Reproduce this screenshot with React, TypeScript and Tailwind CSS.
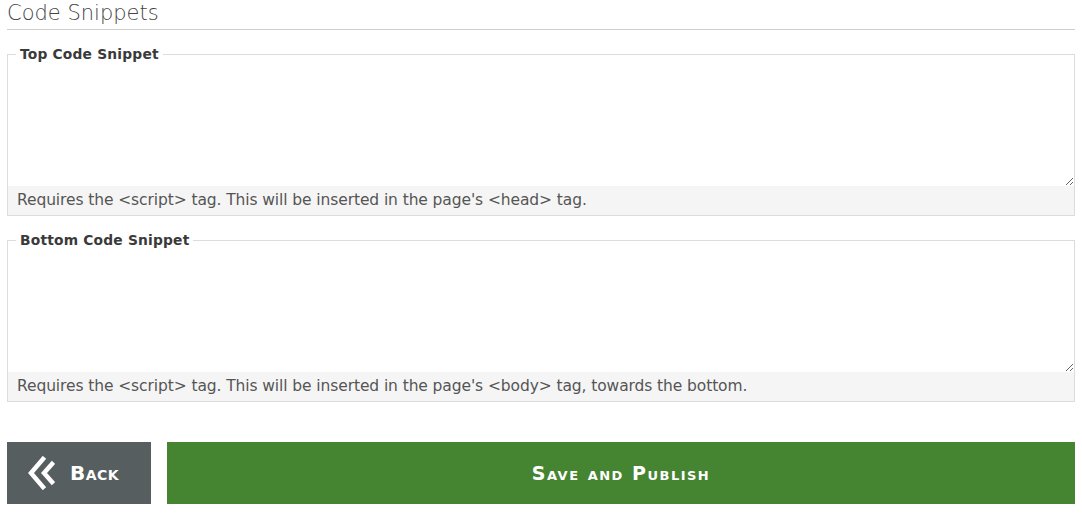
import React from "react";

const font = { fontFamily: '"DejaVu Sans", "Open Sans", sans-serif' };

const Snippet = ({ label, help }: { label: string; help: string }) => {
    return (
        <fieldset className="border border-[#dcdcdc] m-0 p-0 min-w-0">
            <legend className="ml-[8px] px-[4px] text-[13.8px] font-bold text-[#3a3a3a] leading-[17px] tracking-[0.2px]">{label}</legend>
            <textarea className="block w-full h-[124px] mt-[-1px] border-0 outline-none bg-white resize-y" />
            <div className="bg-[#f5f5f5] h-[29px] px-[9px] text-[15.5px] leading-[29px] text-[#555] tracking-[-0.1px]">{help}</div>
        </fieldset>
    );
}

const App = () => {
    return (
        <div className="px-[7px] pb-[10px] bg-white min-h-[513px]" style={font}>
            <h2 className="text-[21px] font-extralight text-[#444] leading-[26px] pt-0 pb-[3px] border-b border-[#cfcfcf]">Code Snippets</h2>

            <div className="mt-[16px]">
                <Snippet label="Top Code Snippet" help="Requires the <script> tag. This will be inserted in the page's <head> tag." />
            </div>
            <div className="mt-[16px]">
                <Snippet label="Bottom Code Snippet" help="Requires the <script> tag. This will be inserted in the page's <body> tag, towards the bottom." />
            </div>

            <div className="flex gap-[16px] mt-[40px]">
                <button className="flex items-center justify-start gap-[15px] pl-[21px] w-[144px] h-[62px] bg-[#565e60] text-white font-bold text-[20px] tracking-[0.5px]" style={{ fontVariant: "small-caps" }}>
                    <svg width="27" height="34" viewBox="0 0 27 34" fill="none" stroke="white" strokeWidth="4.5" strokeLinecap="square">
                        <path d="M15 3 L3 17 L15 31" />
                        <path d="M24 8 L16 17 L24 26" />
                    </svg>
                    Back
                </button>
                <button className="flex-1 h-[62px] bg-[#458430] text-white font-bold text-[19px] tracking-[1.5px]" style={{ fontVariant: "small-caps" }}>
                    Save and Publish
                </button>
            </div>
        </div>
    );
}

export default App;
